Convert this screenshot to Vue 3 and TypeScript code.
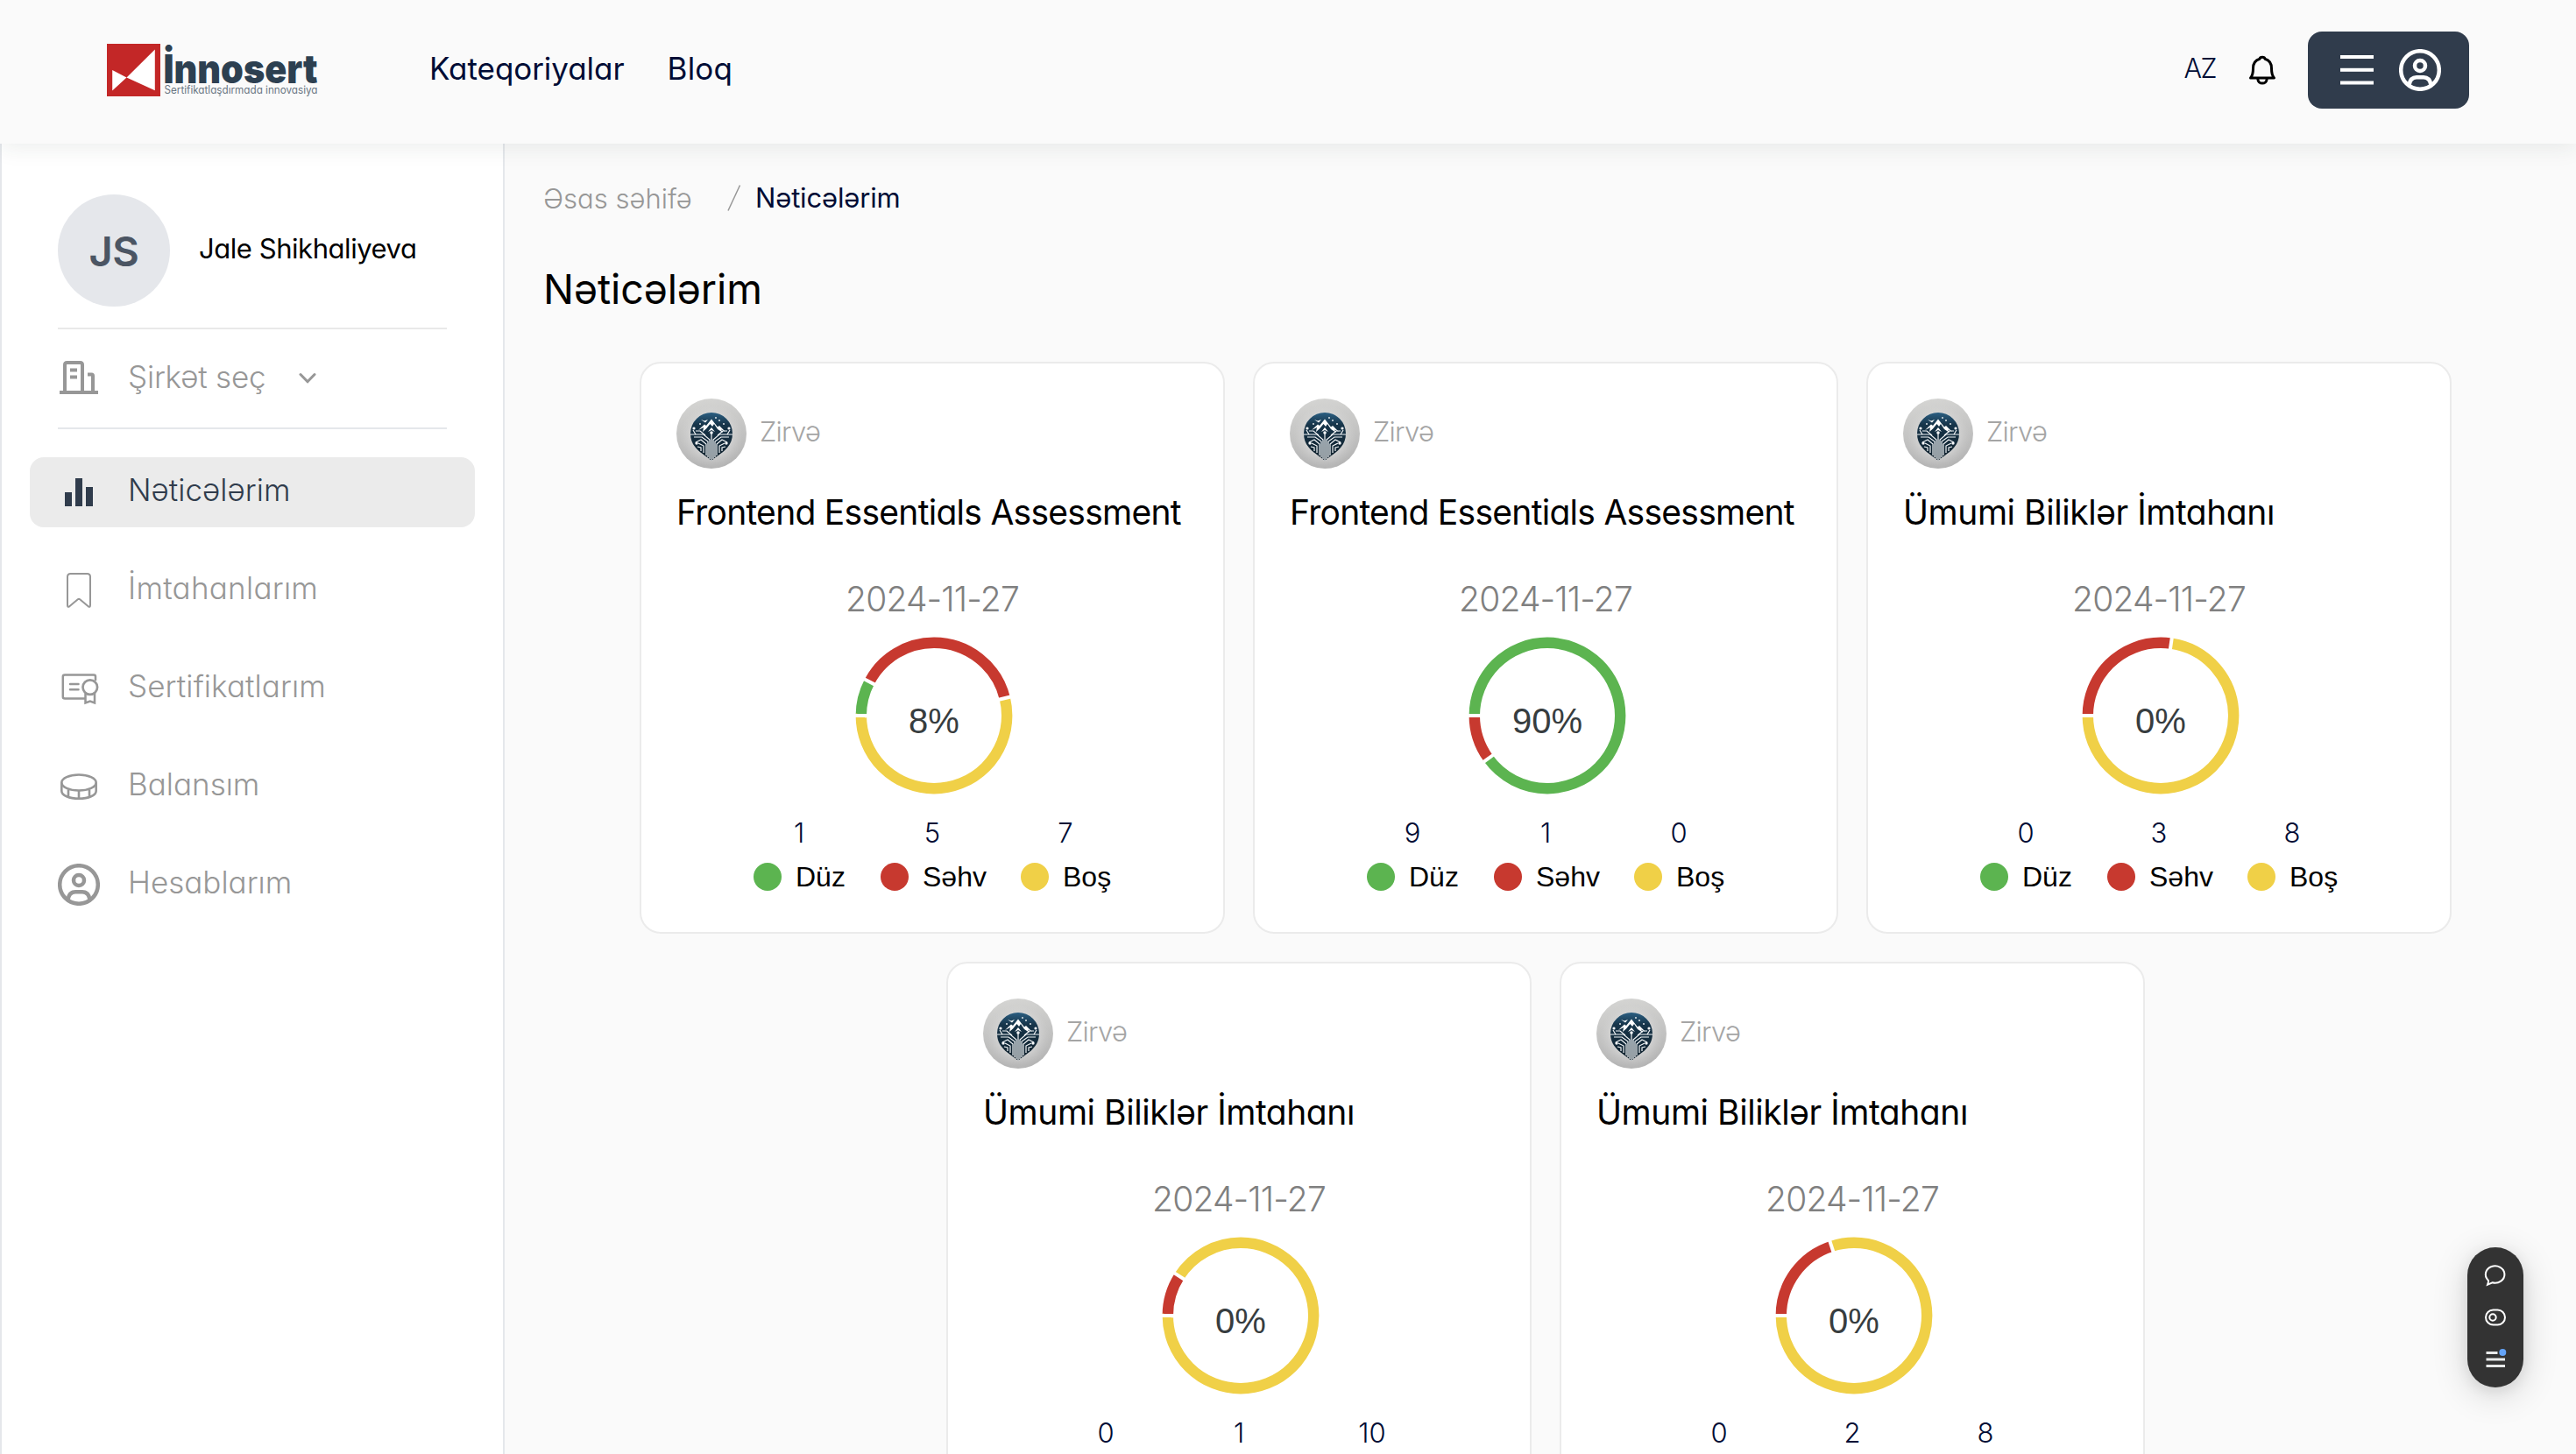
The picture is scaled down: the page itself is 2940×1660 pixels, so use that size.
<script setup lang="ts">
interface Result {
  title: string
  date: string
  correct: number
  wrong: number
  empty: number
}

interface Segment {
  color: string
  length: number
  offset: number
  angle: number
}

const results: Result[] = [
  { title: 'Frontend Essentials Assessment', date: '2024-11-27', correct: 1, wrong: 5, empty: 7 },
  { title: 'Frontend Essentials Assessment', date: '2024-11-27', correct: 9, wrong: 1, empty: 0 },
  { title: 'Ümumi Biliklər İmtahanı', date: '2024-11-27', correct: 0, wrong: 3, empty: 8 },
  { title: 'Ümumi Biliklər İmtahanı', date: '2024-11-27', correct: 0, wrong: 1, empty: 10 },
  { title: 'Ümumi Biliklər İmtahanı', date: '2024-11-27', correct: 0, wrong: 2, empty: 8 },
]

const menu = [
  { id: 'results', label: 'Nəticələrim' },
  { id: 'exams', label: 'İmtahanlarım' },
  { id: 'certificates', label: 'Sertifikatlarım' },
  { id: 'balance', label: 'Balansım' },
  { id: 'accounts', label: 'Hesablarım' },
]

const radius = 83.2
const circumference = 2 * Math.PI * radius

function percent(r: Result): number {
  return Math.round((r.correct / (r.correct + r.wrong + r.empty)) * 100)
}

function segments(r: Result): Segment[] {
  const total = r.correct + r.wrong + r.empty
  const parts = [
    { color: '#5cb450', value: r.correct },
    { color: '#c7392f', value: r.wrong },
    { color: '#f0d047', value: r.empty },
  ]
  let start = 0
  const out: Segment[] = []
  for (const part of parts) {
    if (part.value === 0) continue
    const share = part.value / total
    out.push({
      color: part.color,
      length: share * circumference,
      offset: -start * circumference,
      angle: start * 360,
    })
    start += share
  }
  return out
}
</script>

<template>
  <div class="page">
    <header class="header">
      <svg class="logo" width="244" height="64" viewBox="0 0 244 64">
        <rect width="61" height="60" fill="#c32727" />
        <path d="M54.8 6.5V53.2L22.5 38.4ZM6.2 30V53.4L22.5 38.4Z" fill="#fff" />
        <text class="logo-name" x="64.500" y="45" textLength="176" lengthAdjust="spacingAndGlyphs">İnnosert</text>
        <text class="logo-tag" x="65.500" y="57" textLength="175" lengthAdjust="spacingAndGlyphs">Sertifikatlaşdırmada innovasiya</text>
      </svg>
      <nav class="nav">
        <a class="nav-cat">Kateqoriyalar</a>
        <a class="nav-blog">Bloq</a>
      </nav>
      <div class="tools">
        <span class="lang">AZ</span>
        <svg class="bell" width="32" height="36" viewBox="0 0 32 36" fill="none" stroke="#000" stroke-width="3" stroke-linejoin="round">
          <path d="M2.500 27C5 24.500 5.500 22 5.500 16C5.500 10 8.500 6.500 13 5.200C13.500 2.600 18.500 2.600 19 5.200C23.500 6.500 26.500 10 26.500 16C26.500 22 27 24.500 29.500 27Z" />
          <path d="M10.800 28C11 34.800 21 34.800 21.200 28" />
        </svg>
        <button class="account">
          <svg width="38" height="34" viewBox="0 0 38 34" fill="#fff">
            <rect y="0" width="38" height="4" />
            <rect y="14.800" width="38" height="4" />
            <rect y="29.500" width="38" height="4" />
          </svg>
          <svg width="48" height="48" viewBox="0 0 48 48" fill="none" stroke="#fff" stroke-width="4.500">
            <circle cx="24" cy="24" r="21.800" />
            <circle cx="24" cy="19" r="6" />
            <path d="M11.500 41C12.500 34.500 16 32.200 20 32.200H28C32 32.200 35.500 34.500 36.500 41" />
          </svg>
        </button>
      </div>
    </header>

    <div class="body">
      <aside class="sidebar">
        <div class="profile">
          <div class="avatar">JS</div>
          <span class="name">Jale Shikhaliyeva</span>
        </div>
        <div class="company">
          <svg width="48" height="48" viewBox="0 0 48 48" fill="none" stroke="#979797" stroke-width="4">
            <path d="M2 44H46" />
            <path d="M8 44V12.500Q8 10 10.500 10H25.500Q28 10 28 12.500V44M34 23.500H38.500Q40 23.500 40 25V44" />
            <path d="M14 18.500H22M14 26.500H22" />
          </svg>
          <span class="company-text">Şirkət seç</span>
          <svg class="chevron" width="20" height="14" viewBox="0 0 20 14" fill="none" stroke="#979797" stroke-width="3" stroke-linecap="round" stroke-linejoin="round">
            <path d="M2 2.500L10 10.800L18 2.500" />
          </svg>
        </div>
        <ul class="menu">
          <li v-for="(item, i) in menu" :key="item.id" :class="['item', item.id, { active: i === 0 }]">
            <svg width="48" height="48" viewBox="0 0 48 48" fill="none" stroke="currentColor">
              <g v-if="item.id === 'results'" fill="currentColor" stroke="none">
                <rect x="8" y="24" width="8" height="16" />
                <rect x="20" y="8" width="8" height="32" />
                <rect x="32" y="18" width="8" height="22" />
              </g>
              <path v-else-if="item.id === 'exams'" stroke-width="2" stroke-linejoin="round" d="M11 8.500Q11 5 14.500 5H33.500Q37 5 37 8.500V41Q37 43.500 35 42.500L25.200 34.300Q24 33.400 22.800 34.300L13 42.500Q11 43.500 11 41Z" />
              <g v-else-if="item.id === 'certificates'" stroke-width="2.500">
                <path d="M32 35.500H8Q5.800 35.500 5.800 33.500V10.500Q5.800 8.500 8 8.500H41Q43 8.500 43 10.500V15" />
                <circle cx="36.800" cy="22.600" r="8.300" stroke-width="2.700" />
                <path d="M31.500 30V40.500L36.800 38.500L42 40.500V30" />
                <path d="M14 18.900H23.500M14 25.300H23.500" stroke-linecap="round" />
              </g>
              <g v-else-if="item.id === 'balance'" stroke-width="2.600">
                <ellipse cx="24" cy="19.500" rx="19.700" ry="9" />
                <path d="M4.300 19.500V29C4.300 34 13 37.700 24 37.700S43.700 34 43.700 29V19.500M12 27.500V35.500M24 29V37M36 27.500V35.500" />
              </g>
              <g v-else stroke-width="4.500">
                <circle cx="24" cy="24" r="21.800" />
                <circle cx="24" cy="19" r="6" />
                <path d="M11.500 41C12.500 34.500 16 32.200 20 32.200H28C32 32.200 35.500 34.500 36.500 41" />
              </g>
            </svg>
            <span class="item-label">{{ item.label }}</span>
          </li>
        </ul>
      </aside>

      <main class="main">
        <div class="crumbs">
          <span class="crumb-home">Əsas səhifə</span>
          <svg width="16" height="32" viewBox="0 0 16 32" stroke="#979797" stroke-width="1.500">
            <path d="M1 30.500L14.500 1.500" />
          </svg>
          <span class="crumb-here">Nəticələrim</span>
        </div>
        <h1 class="heading">Nəticələrim</h1>
        <section class="cards">
          <article v-for="(r, i) in results" :key="i" class="card">
            <div class="org">
              <svg width="80" height="80" viewBox="0 0 80 80">
                <defs>
                  <linearGradient :id="'plate' + i" x1="0" y1="0" x2="0.150" y2="1">
                    <stop offset="0" stop-color="#d6d6d4" />
                    <stop offset="1" stop-color="#b5b5b5" />
                  </linearGradient>
                  <radialGradient :id="'halo' + i">
                    <stop offset="0.550" stop-color="#eeeeee" stop-opacity="0.500" />
                    <stop offset="1" stop-color="#d8d8d8" stop-opacity="0" />
                  </radialGradient>
                  <linearGradient :id="'sky' + i" x1="0" y1="0" x2="0" y2="1">
                    <stop offset="0" stop-color="#2b5f82" />
                    <stop offset="0.250" stop-color="#17354a" />
                    <stop offset="1" stop-color="#0f1f2a" />
                  </linearGradient>
                </defs>
                <circle cx="40" cy="40" r="40" :fill="`url(#plate${i})`" />
                <circle cx="40" cy="43" r="36" :fill="`url(#halo${i})`" />
                <path d="M40 71C33 64 16 58 16 40A24 24 0 0 1 64 40C64 58 47 64 40 71Z" :fill="`url(#sky${i})`" />
                <path d="M25 36L32 29.500L34 31L40 23.500L47 32.500L49 31L56 38L51 35.500L53 39L47 35L43 29L41 32L38.500 29L34 34.500L30 38L31 33Z" fill="#fff" />
                <path d="M28 24L32 25.500L36 24L33 27.500ZM36 38L40 33L44 38L40 36Z" fill="#fff" />
                <g fill="none" stroke="#f2f5f7" stroke-width="1.200">
                  <path d="M40 71V40M38 69V47L31 41H16M42 69V47L49 41H64M36 67V49L29 44H20M44 67V49L51 44H60M34 65V52L28 47L22 50M46 65V52L52 47L58 50M31 62V54L25 51M49 62V54L55 51M28 60V56L24 55M52 60V56L56 55" />
                  <path d="M33 42L27 37H22M47 42L53 37H58M22 41L19 36M58 41L61 36" />
                </g>
                <g fill="#f2f5f7">
                  <circle cx="20" cy="34" r="1.600" /><circle cx="60" cy="34" r="1.600" />
                  <circle cx="23" cy="51" r="1.700" /><circle cx="57" cy="51" r="1.700" />
                  <circle cx="40" cy="39" r="1.800" /><circle cx="27" cy="29" r="0.900" />
                  <circle cx="49" cy="25" r="0.900" /><circle cx="54" cy="29" r="0.900" /><circle cx="45" cy="22" r="0.900" />
                </g>
              </svg>
              <span class="org-name">Zirvə</span>
            </div>
            <h2 :class="['card-title', { long: r.title.length > 25 }]">{{ r.title }}</h2>
            <div class="date">{{ r.date }}</div>
            <svg class="donut" width="180" height="180" viewBox="-90 -90 180 180">
              <g transform="rotate(180)">
                <circle
                  v-for="s in segments(r)"
                  :key="s.color"
                  :r="radius"
                  fill="none"
                  :stroke="s.color"
                  stroke-width="12.400"
                  :stroke-dasharray="`${s.length} ${circumference - s.length}`"
                  :stroke-dashoffset="s.offset"
                />
                <line
                  v-for="s in segments(r)"
                  :key="'gap' + s.color"
                  x1="74"
                  x2="90"
                  stroke="#fff"
                  stroke-width="4"
                  :transform="`rotate(${s.angle})`"
                />
              </g>
              <text class="percent" x="0" y="20" text-anchor="middle">{{ percent(r) }}%</text>
            </svg>
            <div class="values">
              <span>{{ r.correct }}</span>
              <span>{{ r.wrong }}</span>
              <span>{{ r.empty }}</span>
            </div>
            <div class="legend">
              <span class="key"><i class="dot green"></i>Düz</span>
              <span class="key"><i class="dot red"></i>Səhv</span>
              <span class="key"><i class="dot yellow"></i>Boş</span>
            </div>
          </article>
        </section>
      </main>
    </div>

    <div class="widget">
      <svg width="28" height="28" viewBox="0 0 28 28" fill="none" stroke="#fff" stroke-width="2">
        <path d="M5.600 19.500A10.800 9.700 0 1 1 10.500 22.300L5 24.800L6 21.500Q6.400 20.400 5.600 19.500Z" />
      </svg>
      <svg width="28" height="28" viewBox="0 0 28 28" fill="none" stroke="#fff" stroke-width="2">
        <rect x="3" y="5.500" width="22" height="17" rx="8.500" />
        <circle cx="11" cy="14" r="3.700" />
      </svg>
      <svg width="28" height="28" viewBox="0 0 28 28">
        <path d="M3.500 6.500H16.500M3.500 14H25M3.500 21.500H25" stroke="#e8eaea" stroke-width="3" />
        <circle cx="22.300" cy="6" r="4" fill="#64a4f8" />
      </svg>
    </div>
  </div>
</template>

<style>
body {
  background: #fafafa;
  overflow: hidden;
}
</style>

<style scoped>
.page {
  position: relative;
  width: 2940px;
  height: 1660px;
  overflow: hidden;
  display: flex;
  flex-direction: column;
  background: #fafafa;
  color: #000;
  font-family: Inter, "Noto Sans", sans-serif;
  font-feature-settings: "cv11" 1;
}

svg {
  display: block;
  flex: none;
}

.header {
  box-sizing: border-box;
  height: 164px;
  padding: 0 122px 4px;
  display: flex;
  align-items: center;
  background: #fafafa;
  box-shadow: 0 4px 24px rgba(30, 60, 45, 0.09);
  z-index: 2;
  flex: none;
}

.logo {
  margin-top: 4px;
  overflow: visible;
}

.logo-name {
  font-size: 45px;
  font-weight: 900;
  fill: #2d4051;
}

.logo-tag {
  font-size: 12.5px;
  fill: #6a7784;
}

.nav {
  display: flex;
  gap: 49px;
  margin-left: 124px;
  padding-bottom: 5px;
  font-size: 35px;
  line-height: 44px;
  color: #000c35;
  white-space: nowrap;
}

.nav-cat {
  letter-spacing: -0.05px;
}

.nav-blog {
  letter-spacing: 0.2px;
}

.tools {
  display: flex;
  align-items: center;
  margin-left: auto;
}

.lang {
  font-size: 30.5px;
  line-height: 40px;
  font-weight: 300;
  color: #000c35;
  padding-bottom: 4px;
  letter-spacing: -1.5px;
}

.bell {
  margin-left: 37px;
}

.account {
  box-sizing: border-box;
  width: 184px;
  height: 88px;
  margin-left: 36px;
  padding: 0 32px 0 37px;
  border: 0;
  border-radius: 16px;
  background: #303c4c;
  display: flex;
  align-items: center;
  justify-content: space-between;
}

.body {
  flex: 1;
  display: flex;
  min-height: 0;
}

.sidebar {
  box-sizing: border-box;
  width: 576px;
  flex: none;
  background: #fff;
  border: 2px solid #e5e7eb;
  border-width: 0 2px;
}

.profile {
  display: flex;
  align-items: center;
  margin: 0 64px;
  padding: 58px 0 24px;
  border-bottom: 2px solid #e9e9e9;
}

.avatar {
  width: 128px;
  height: 128px;
  border-radius: 50%;
  background: #e5e7eb;
  color: #4b5563;
  font-size: 47px;
  font-weight: 600;
  line-height: 130px;
  letter-spacing: -0.5px;
  text-align: center;
}

.name {
  margin-left: 33px;
  padding-bottom: 4px;
  font-size: 31px;
  line-height: 40px;
  letter-spacing: -0.45px;
  white-space: nowrap;
}

.company {
  display: flex;
  align-items: center;
  height: 112px;
  margin: 0 64px;
  border-bottom: 2px solid #e5e7eb;
  color: #979797;
  font-size: 35px;
  font-weight: 300;
}

.company svg:first-child {
  margin-top: -8px;
}

.company-text {
  width: 158px;
  margin-left: 32px;
  padding-bottom: 5px;
  letter-spacing: -0.2px;
  white-space: nowrap;
}

.chevron {
  margin-left: 37px;
}

.menu {
  list-style: none;
  margin: 32px 32px 0;
  padding: 0;
  display: flex;
  flex-direction: column;
  gap: 32px;
}

.item {
  display: flex;
  align-items: center;
  gap: 32px;
  height: 80px;
  padding-left: 32px;
  border-radius: 16px;
  color: #979797;
  font-size: 35px;
  font-weight: 300;
  white-space: nowrap;
}

.item.active {
  background: #ebebeb;
  color: #303c4c;
}

.item.exams {
  letter-spacing: 0.25px;
}

.item.certificates {
  letter-spacing: 0.1px;
}

.item-label {
  padding-bottom: 6px;
}

.main {
  flex: 1;
  padding: 42px 32px 0 44px;
}

.crumbs {
  display: flex;
  align-items: center;
  height: 40px;
  font-size: 31px;
  line-height: 40px;
  white-space: nowrap;
}

.crumb-home {
  width: 210px;
  color: #979797;
  font-weight: 300;
  padding-top: 1px;
}

.crumb-here {
  margin-left: 16px;
  color: #000c35;
  letter-spacing: -0.15px;
}

.heading {
  margin: 54px 0 53px;
  font-size: 46.5px;
  line-height: 60px;
  font-weight: 400;
  letter-spacing: -0.1px;
}

.cards {
  display: flex;
  flex-wrap: wrap;
  justify-content: center;
  gap: 32px;
}

.card {
  box-sizing: border-box;
  width: 668px;
  height: 653px;
  padding: 40px;
  border: 2px solid #ebebeb;
  border-radius: 24px;
  background: #fff;
}

.org {
  display: flex;
  align-items: center;
}

.org-name {
  margin-left: 15px;
  padding-bottom: 4px;
  font-size: 31px;
  line-height: 40px;
  font-weight: 300;
  letter-spacing: -0.7px;
  color: #a5a5a5;
}

.card-title {
  margin: 26px 0 0;
  font-size: 39px;
  line-height: 48px;
  font-weight: 400;
  letter-spacing: -0.45px;
  white-space: nowrap;
}

.card-title.long {
  letter-spacing: -0.72px;
}

.date {
  margin-top: 51px;
  font-size: 39px;
  line-height: 48px;
  font-weight: 300;
  letter-spacing: -0.85px;
  color: #808080;
  text-align: center;
}

.donut {
  margin: 19px 0 0 204px;
}

.percent {
  font-family: "Liberation Sans", Arial, sans-serif;
  font-size: 40px;
  fill: #373d3f;
}

.values {
  display: grid;
  grid-template-columns: repeat(3, 152px);
  justify-content: center;
  margin-top: 23px;
  font-size: 31px;
  line-height: 41px;
  font-weight: 300;
  color: #000c35;
  text-align: center;
}

.legend {
  display: flex;
  margin: 9px 0 0 88px;
  font-family: "Liberation Sans", Arial, sans-serif;
  font-size: 32px;
  line-height: 42px;
}

.key {
  display: flex;
  align-items: center;
  gap: 16px;
  width: 145px;
  white-space: nowrap;
}

.key + .key {
  width: 160px;
}

.dot {
  width: 32px;
  height: 32px;
  border-radius: 50%;
  flex: none;
}

.green {
  background: #5cb450;
}

.red {
  background: #c7392f;
}

.yellow {
  background: #f0d047;
}

.widget {
  position: absolute;
  left: 2816px;
  top: 1424px;
  box-sizing: border-box;
  width: 64px;
  height: 160px;
  padding: 18px;
  border-radius: 32px;
  background: #333;
  box-shadow: 0 8px 40px rgba(0, 0, 0, 0.16), 0 4px 16px rgba(0, 0, 0, 0.08);
  display: flex;
  flex-direction: column;
  justify-content: space-between;
  z-index: 3;
}
</style>
